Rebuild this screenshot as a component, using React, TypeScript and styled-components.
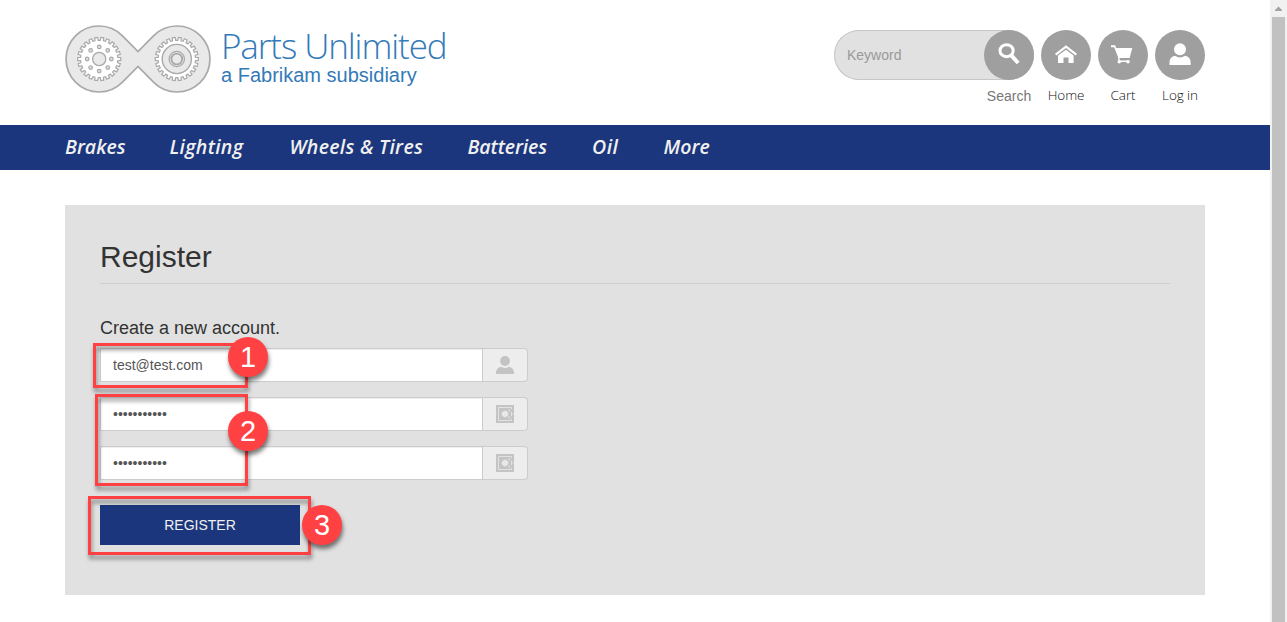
import React from "react";
import styled, { createGlobalStyle } from "styled-components";

const Global = createGlobalStyle`
  *, *::before, *::after { box-sizing: border-box; }
  html, body { margin: 0; height: 100%; overflow: hidden; background: #fff; }
  body { font-family: "Liberation Sans", Arial, sans-serif; color: #333; }
`;

const navy = "#1b367c";
const red = "#ff4144";
const light = `"Open Sans", "Noto Sans", sans-serif`;

const Window = styled.div`
  display: flex;
  height: 622px;
  overflow: hidden;
`;
const Page = styled.div`
  flex: 1;
  min-width: 0;
`;
const Container = styled.div`
  width: 1140px;
  margin: 0 auto;
  display: flex;
`;
const Header = styled(Container)`
  height: 125px;
  justify-content: space-between;
`;
const Brand = styled.a`
  display: flex;
  padding-top: 25px;
  gap: 10px;
  color: #337ab7;
`;
const BrandText = styled.div`
  display: flex;
  flex-direction: column;
  white-space: nowrap;
`;
const BrandName = styled.span`
  font: 300 35px/42px ${light};
  letter-spacing: -1.1px;
`;
const BrandTag = styled.span`
  font-size: 20px;
  line-height: 22px;
  margin-top: -3px;
`;
const Tools = styled.div`
  display: flex;
  padding-top: 30px;
  gap: 7px;
`;
const Search = styled.div`
  display: flex;
  width: 200px;
  height: 50px;
  border-radius: 25px;
  background: #e1e1e1;
  box-shadow: inset 0 0 0 1px #c6c6c6;
  justify-content: space-between;
`;
const Placeholder = styled.span`
  padding-left: 13px;
  font-size: 14px;
  line-height: 50px;
  color: #999;
`;
const Tool = styled.div`
  width: 50px;
  display: flex;
  flex-direction: column;
  align-items: center;
`;
const Round = styled.span`
  width: 50px;
  height: 50px;
  flex: none;
  border-radius: 50%;
  background: #9f9f9f;
  svg { display: block; }
`;
const ToolLabel = styled.span<{ $plain?: boolean }>`
  margin-top: ${(p) => (p.$plain ? 7 : 6)}px;
  font: ${(p) => (p.$plain ? `400 14px/18px "Liberation Sans", Arial, sans-serif` : `300 13.5px/18px ${light}`)};
  color: ${(p) => (p.$plain ? "#777" : "#111")};
  letter-spacing: ${(p) => (p.$plain ? 0 : -0.1)}px;
  white-space: nowrap;
`;
const NavBar = styled.nav`
  height: 45px;
  background: ${navy};
`;
const NavList = styled(Container)`
  gap: 45px;
`;
const NavItem = styled.a<{ $w: number; $track: number }>`
  width: ${(p) => p.$w}px;
  font: italic 600 19.5px/44px ${light};
  letter-spacing: ${(p) => p.$track}px;
  white-space: nowrap;
  color: #f0f0f0;
`;
const Panel = styled.main`
  width: 1140px;
  height: 390px;
  margin: 35px auto 0;
  padding: 35px;
  background: #e1e1e1;
`;
const Title = styled.h2`
  margin: 0;
  height: 44px;
  padding-bottom: 10px;
  border-bottom: 1px solid #cecece;
  font-size: 30px;
  line-height: 33px;
  font-weight: 400;
`;
const Form = styled.form`
  position: relative;
  padding-top: 34px;
  width: 428px;
`;
const FormTitle = styled.h4`
  margin: 0 0 10px;
  font-size: 18px;
  line-height: 20px;
  font-weight: 400;
`;
const Field = styled.div`
  display: flex;
  height: 34px;
  margin-bottom: 15px;
`;
const Value = styled.div`
  width: 383px;
  border: 1px solid #ccc;
  background: #fff;
  padding-left: 12px;
  font-size: 14px;
  line-height: 32px;
  color: #555;
  box-shadow: inset 0 1px 1px rgba(0, 0, 0, 0.075);
`;
const Addon = styled.div`
  width: 45px;
  border: 1px solid #ccc;
  border-left: 0;
  border-radius: 0 4px 4px 0;
  background: #ededed;
  display: flex;
  align-items: center;
  justify-content: center;
`;
const Submit = styled.div`
  width: 200px;
  height: 40px;
  margin-top: 25px;
  background: ${navy};
  color: #f0f0f0;
  font-size: 14px;
  line-height: 40px;
  text-align: center;
`;
const Outline = styled.div<{ $x: number; $y: number; $w: number; $h: number }>`
  position: absolute;
  left: ${(p) => p.$x}px;
  top: ${(p) => p.$y}px;
  width: ${(p) => p.$w}px;
  height: ${(p) => p.$h}px;
  border: 3px solid ${red};
  filter: drop-shadow(1px 4px 2px rgba(0, 0, 0, 0.42));
`;
const Badge = styled.div<{ $x: number; $y: number }>`
  position: absolute;
  left: ${(p) => p.$x}px;
  top: ${(p) => p.$y}px;
  width: 40px;
  height: 40px;
  border-radius: 50%;
  background: ${red};
  color: #fff;
  font-size: 29px;
  line-height: 41px;
  text-align: center;
  box-shadow: 1px 4px 4px rgba(0, 0, 0, 0.5);
`;
const ScrollBar = styled.div`
  width: 17px;
  background: #f1f1f1;
  display: flex;
  flex-direction: column;
  align-items: center;
`;
const Thumb = styled.div`
  width: 13px;
  flex: 1;
  background: #c1c1c1;
`;

function gearPath(cx: number, cy: number, outer: number, inner: number, teeth: number) {
  const points: string[] = [];
  const step = (Math.PI * 2) / teeth;
  const at = (r: number, a: number) => `${(cx + r * Math.cos(a)).toFixed(2)} ${(cy + r * Math.sin(a)).toFixed(2)}`;
  for (let i = 0; i < teeth; i++) {
    const a = i * step;
    points.push(at(outer, a - step * 0.24), at(outer, a + step * 0.24), at(inner, a + step * 0.3), at(inner, a + step * 0.7));
  }
  return `M${points.join("L")}Z`;
}

const Logo = () => (
  <svg width="146" height="69" viewBox="0 0 146 69" fill="#e9e9e9" stroke="#a9a9a9">
    <path
      strokeWidth="1.7"
      d="M57.5 10.8 73 26.6L88.5 10.8A33 33 0 1 1 88.5 57.2L73 41.4L57.5 57.2A33 33 0 1 1 57.5 10.8Z"
    />
    <path fill="#fff" strokeWidth="1.2" d={gearPath(34.2, 34, 21.6, 18.7, 22)} />
    <circle cx="34.2" cy="34" r="6.6" strokeWidth="1.3" />
    {Array.from({ length: 8 }, (_, i) => (
      <circle
        key={i}
        cx={34.2 + 12.1 * Math.cos((i * Math.PI) / 4)}
        cy={34 + 12.1 * Math.sin((i * Math.PI) / 4)}
        r="1.8"
        strokeWidth="1.2"
        fill="#ddd"
      />
    ))}
    <path fill="#fff" strokeWidth="1.2" d={gearPath(111.8, 34, 21.6, 18.7, 22)} />
    <circle cx="111.8" cy="34" r="14.6" strokeWidth="1.4" />
    <circle cx="111.8" cy="34" r="7.7" strokeWidth="1.2" />
    <circle cx="111.8" cy="34" r="5.4" strokeWidth="1.9" />
  </svg>
);

const SearchIcon = () => (
  <svg width="50" height="50" fill="none" stroke="#fff">
    <ellipse cx="22.6" cy="20.7" rx="6.6" ry="6" strokeWidth="3" />
    <path d="M27 25.2 34.2 33" strokeWidth="4" />
  </svg>
);
const HomeIcon = () => (
  <svg width="50" height="50" fill="#fff">
    <path d="M25 15.2 36 23.7 34.7 25.4 25 18 15.3 25.4 14 23.7Z" />
    <path d="M25 19.8 32.6 25.6V33H27.5V27.5H22.5V33H17V25.6Z" />
  </svg>
);
const CartIcon = () => (
  <svg width="50" height="50" fill="#fff">
    <path d="M13 15.3H17.2L18.2 18H34.3L31.6 28H20.4L16.2 17.2H13Z" />
    <path d="M20.5 26.8 21.3 31.2H30" stroke="#fff" strokeWidth="1.4" fill="none" />
    <circle cx="21.3" cy="31.8" r="1.8" />
    <circle cx="30" cy="31.8" r="1.8" />
  </svg>
);
const UserIcon = () => (
  <svg width="50" height="50" fill="#fff">
    <circle cx="25" cy="19.2" r="6" />
    <path d="M14.5 35V31.5Q15 27 20 25.8Q25 29 30 25.8Q35.2 27 35.6 31.5V35Z" />
  </svg>
);
const SmallUser = () => (
  <svg width="18" height="20" fill="#c3c3c3">
    <circle cx="9" cy="6" r="4.9" />
    <path d="M0 19V17Q.4 13 5 11.7Q9 14.3 13 11.7Q17.6 13 18 17V19Z" />
  </svg>
);
const Safe = () => (
  <svg width="18" height="18" fill="#c4c4c4">
    <path d="M0 0H18V18H0Z" />
    <path d="M2.5 2.5H15.5V15.5H2.5Z" fill="none" stroke="#e2e2e2" strokeWidth="1" />
    <circle cx="9" cy="9" r="3" fill="#ededed" />
    <path d="M5.2 9H12.8M9 5.2V12.8" stroke="#e2e2e2" strokeWidth="1" />
    <path d="M13.5 5.5H16.5M13.5 12.5H16.5" stroke="#c4c4c4" strokeWidth="2.4" />
    <path d="M16.6 9H18M13.2 4.2V6.8M13.2 11.2V13.8" stroke="#e2e2e2" strokeWidth="1.2" />
  </svg>
);

const navItems: [string, number, number][] = [
  ["Brakes", 59.5, 0],
  ["Lighting", 75, 0.3],
  ["Wheels & Tires", 133, 0.3],
  ["Batteries", 79.5, -0.1],
  ["Oil", 26.5, 0.5],
  ["More", 45, 0],
];
const tools = [
  { label: "Home", Icon: HomeIcon },
  { label: "Cart", Icon: CartIcon },
  { label: "Log in", Icon: UserIcon },
];
const fields = [
  { value: "test@test.com", Icon: SmallUser },
  { value: "•••••••••••", Icon: Safe },
  { value: "•••••••••••", Icon: Safe },
];

export default function App() {
  return (
    <Window>
      <Global />
      <Page>
        <Header as="header">
          <Brand>
            <Logo />
            <BrandText>
              <BrandName>Parts Unlimited</BrandName>
              <BrandTag>a Fabrikam subsidiary</BrandTag>
            </BrandText>
          </Brand>
          <Tools>
            <Search>
              <Placeholder>Keyword</Placeholder>
              <Tool>
                <Round><SearchIcon /></Round>
                <ToolLabel $plain>Search</ToolLabel>
              </Tool>
            </Search>
            {tools.map(({ label, Icon }) => (
              <Tool key={label}>
                <Round><Icon /></Round>
                <ToolLabel>{label}</ToolLabel>
              </Tool>
            ))}
          </Tools>
        </Header>
        <NavBar>
          <NavList>
            {navItems.map(([label, width, track]) => (
              <NavItem key={label} $w={width} $track={track}>{label}</NavItem>
            ))}
          </NavList>
        </NavBar>
        <Panel>
          <Title>Register</Title>
          <Form>
            <FormTitle>Create a new account.</FormTitle>
            {fields.map(({ value, Icon }, i) => (
              <Field key={i}>
                <Value>{value}</Value>
                <Addon><Icon /></Addon>
              </Field>
            ))}
            <Submit>REGISTER</Submit>
            <Outline $x={-7} $y={59} $w={155} $h={45} />
            <Outline $x={-5} $y={110} $w={153} $h={92} />
            <Outline $x={-12} $y={212} $w={223} $h={59} />
            <Badge $x={128} $y={53}>1</Badge>
            <Badge $x={128} $y={127}>2</Badge>
            <Badge $x={202} $y={221}>3</Badge>
          </Form>
        </Panel>
      </Page>
      <ScrollBar>
        <svg width="17" height="17">
          <path d="M5 11V10L8.5 6.5 12 10V11Z" fill="#a3a3a3" />
        </svg>
        <Thumb />
      </ScrollBar>
    </Window>
  );
}
